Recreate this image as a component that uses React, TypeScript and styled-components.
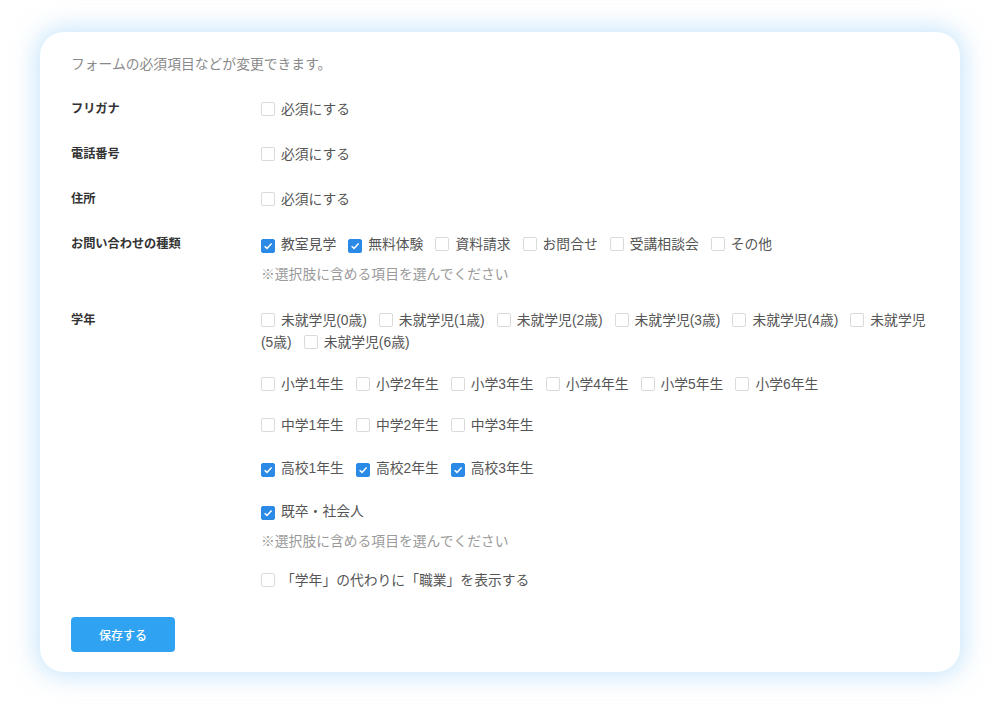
import React from "react";
import styled, { createGlobalStyle } from "styled-components";

const Global = createGlobalStyle`
  html, body { margin: 0; padding: 0; background: #ffffff; }
  body { font-family: "Liberation Sans", "Noto Sans CJK JP", sans-serif; }
  * { box-sizing: border-box; }
`;

const Page = styled.div`
  min-height: 708px;
  padding: 32px 40px 36px;
  background: #fff;
`;

const Card = styled.div`
  width: 920px;
  background: #fff;
  border-radius: 24px;
  box-shadow: 0 0 22px 6px rgba(170, 215, 248, 0.55);
  padding: 22px 25px 20px 31px;
`;

const Intro = styled.p`
  margin: 0 0 23px;
  font-size: 13.8px;
  line-height: 22px;
  color: #8a8a8a;
`;

const Fields = styled.div`
  display: flex;
  flex-direction: column;
  gap: 23px;
`;

const Row = styled.div`
  display: grid;
  grid-template-columns: 190px 1fr;
  align-items: start;
`;

const Label = styled.div`
  font-size: 12.2px;
  font-weight: 700;
  color: #333;
  line-height: 20px;
`;

const Controls = styled.div`
  display: flex;
  flex-direction: column;
`;

const Group = styled.div<{ $mb?: number }>`
  font-size: 13.8px;
  line-height: 22px;
  color: #555;
  margin-bottom: ${(p) => p.$mb ?? 0}px;
`;

const Option = styled.label`
  display: inline;
  margin-right: 12px;
  cursor: pointer;
`;

const Box = styled.span<{ $checked?: boolean }>`
  display: inline-flex;
  align-items: center;
  justify-content: center;
  width: 14px;
  height: 14px;
  margin-right: 6px;
  vertical-align: -2px;
  border-radius: 2px;
  border: 1px solid ${(p) => (p.$checked ? "#2a8ae6" : "#dadada")};
  background: ${(p) => (p.$checked ? "#2a8ae6" : "#fff")};
`;

const Note = styled.div<{ $mb?: number }>`
  margin-top: 8px;
  margin-bottom: ${(p) => p.$mb ?? 0}px;
  font-size: 13.8px;
  line-height: 22px;
  color: #9a9a9a;
`;

const SaveButton = styled.button`
  margin-top: 25px;
  width: 104px;
  height: 35px;
  border: none;
  border-radius: 4px;
  background: #2fa3f2;
  color: #fff;
  font-family: inherit;
  font-size: 12px;
  font-weight: 500;
  cursor: pointer;
`;

const Check = () => (
  <svg width="10" height="10" viewBox="0 0 10 10">
    <path d="M1.6 5.2 L4 7.4 L8.6 2.4" fill="none" stroke="#fff" strokeWidth="1.5" />
  </svg>
);

type Opt = { label: string; checked?: boolean };

const CheckOption = ({ label, checked }: Opt) => (
  <Option>
    <Box $checked={checked}>{checked && <Check />}</Box>
    {label}
  </Option>
);

const OptionGroup = ({ items, mb }: { items: Opt[]; mb?: number }) => (
  <Group $mb={mb}>
    {items.map((it) => (
      <CheckOption key={it.label} {...it} />
    ))}
  </Group>
);

const inquiry: Opt[] = [
  { label: "教室見学", checked: true },
  { label: "無料体験", checked: true },
  { label: "資料請求" },
  { label: "お問合せ" },
  { label: "受講相談会" },
  { label: "その他" },
];

const preschool: Opt[] = [0, 1, 2, 3, 4, 5, 6].map((n) => ({ label: `未就学児(${n}歳)` }));
const elementary: Opt[] = [1, 2, 3, 4, 5, 6].map((n) => ({ label: `小学${n}年生` }));
const junior: Opt[] = [1, 2, 3].map((n) => ({ label: `中学${n}年生` }));
const high: Opt[] = [1, 2, 3].map((n) => ({ label: `高校${n}年生`, checked: true }));

export default function App() {
  return (
    <>
      <Global />
      <Page>
        <Card>
          <Intro>フォームの必須項目などが変更できます。</Intro>
          <Fields>
            <Row>
              <Label>フリガナ</Label>
              <OptionGroup items={[{ label: "必須にする" }]} />
            </Row>
            <Row>
              <Label>電話番号</Label>
              <OptionGroup items={[{ label: "必須にする" }]} />
            </Row>
            <Row>
              <Label>住所</Label>
              <OptionGroup items={[{ label: "必須にする" }]} />
            </Row>
            <Row>
              <Label>お問い合わせの種類</Label>
              <Controls>
                <OptionGroup items={inquiry} />
                <Note $mb={1}>※選択肢に含める項目を選んでください</Note>
              </Controls>
            </Row>
            <Row>
              <Label>学年</Label>
              <Controls>
                <OptionGroup items={preschool} mb={20} />
                <OptionGroup items={elementary} mb={19} />
                <OptionGroup items={junior} mb={21} />
                <OptionGroup items={high} mb={21} />
                <OptionGroup items={[{ label: "既卒・社会人", checked: true }]} />
                <Note $mb={17}>※選択肢に含める項目を選んでください</Note>
                <OptionGroup items={[{ label: "「学年」の代わりに「職業」を表示する" }]} />
              </Controls>
            </Row>
          </Fields>
          <SaveButton>保存する</SaveButton>
        </Card>
      </Page>
    </>
  );
}
